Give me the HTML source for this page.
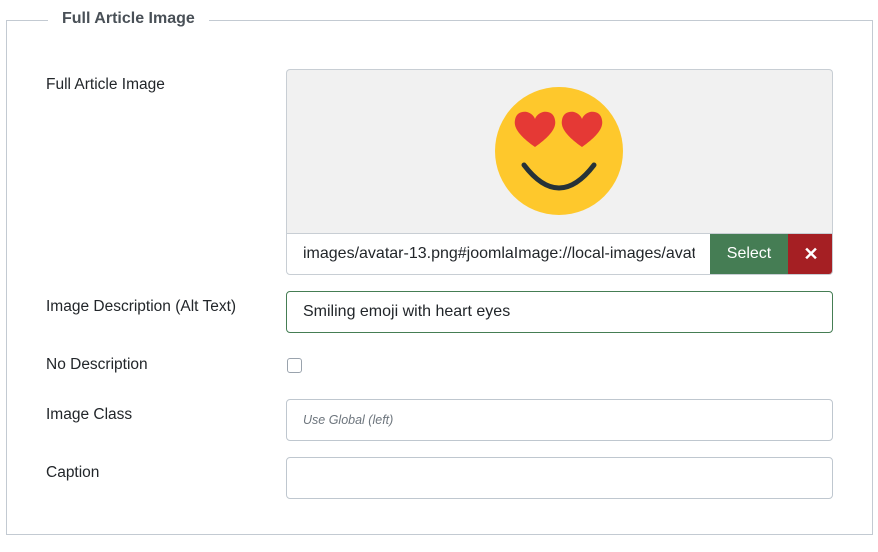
<!DOCTYPE html>
<html><head><meta charset="utf-8"><style>
*{box-sizing:border-box}
body{margin:0;width:878px;height:552px;background:#fff;font-family:"Liberation Sans",sans-serif;color:#22262a;position:relative;overflow:hidden}
.fs{position:absolute;left:6px;top:20px;width:867px;height:515px;border:1px solid #c3cad2}
.lg{position:absolute;left:48px;top:10px;background:#fff;padding:0 14px;font-weight:bold;font-size:16px;color:#495057}
.lb{position:absolute;left:46px;font-size:15.5px;color:#22262a}
.in{position:absolute;left:286px;width:547px;height:42px;border:1px solid #bfc7cf;border-radius:4px;background:#fff}
</style></head><body>
<div class="fs"></div>
<div class="lg">Full Article Image</div>
<div class="lb" style="top:76px">Full Article Image</div>
<div style="position:absolute;left:286px;top:69px;width:547px;height:165px;background:#f1f1f1;border:1px solid #c8ced4;border-bottom:none;border-radius:4px 4px 0 0"></div>
<svg style="position:absolute;left:494px;top:87px" width="130" height="130" viewBox="0 0 130 130">
<circle cx="65" cy="64" r="64" fill="#fec82c"/>
<path d="M41 60 C21 46 20 38 21 33 C22 26 28 24 33 25 C37 26 40 29 41 32 C42 29 45 26 49 25 C54 24 60 26 61 33 C62 38 61 46 41 60Z" fill="#e53935"/>
<path d="M88 60 C68 46 67 38 68 33 C69 26 75 24 80 25 C84 26 87 29 88 32 C89 29 92 26 96 25 C101 24 107 26 108 33 C109 38 108 46 88 60Z" fill="#e53935"/>
<path d="M30 78 Q65 124 100 78" stroke="#263238" stroke-width="5" fill="none" stroke-linecap="round"/>
</svg>
<div style="position:absolute;left:286px;top:233px;width:547px;height:42px;border:1px solid #c8ced4;border-radius:0 0 4px 4px;background:#fff;overflow:hidden">
<div style="position:absolute;left:16px;top:11px;font-size:16px;white-space:nowrap;width:392px;overflow:hidden">images/avatar-13.png#joomlaImage://local-images/avatar-13.png</div>
<div style="position:absolute;left:423px;top:-1px;width:78px;height:42px;background:#457d54;color:#fff;font-size:16px;text-align:center;line-height:42px">Select</div>
<div style="position:absolute;left:501px;top:-1px;width:46px;height:42px;background:#a51f23;color:#fff;font-size:18px;font-weight:bold;text-align:center;line-height:42px">✕</div>
</div>
<div class="lb" style="top:298px">Image Description (Alt Text)</div>
<div class="in" style="top:291px;border-color:#457d54"><div style="position:absolute;left:16px;top:11px;font-size:16px">Smiling emoji with heart eyes</div></div>
<div class="lb" style="top:356px">No Description</div>
<div style="position:absolute;left:287px;top:358px;width:15px;height:15px;border:1px solid #9aa3ad;border-radius:3px"></div>
<div class="lb" style="top:406px">Image Class</div>
<div class="in" style="top:399px"><div style="position:absolute;left:16px;top:13px;font-size:12.5px;font-style:italic;color:#6d757d">Use Global (left)</div></div>
<div class="lb" style="top:464px">Caption</div>
<div class="in" style="top:457px"></div>
</body></html>
